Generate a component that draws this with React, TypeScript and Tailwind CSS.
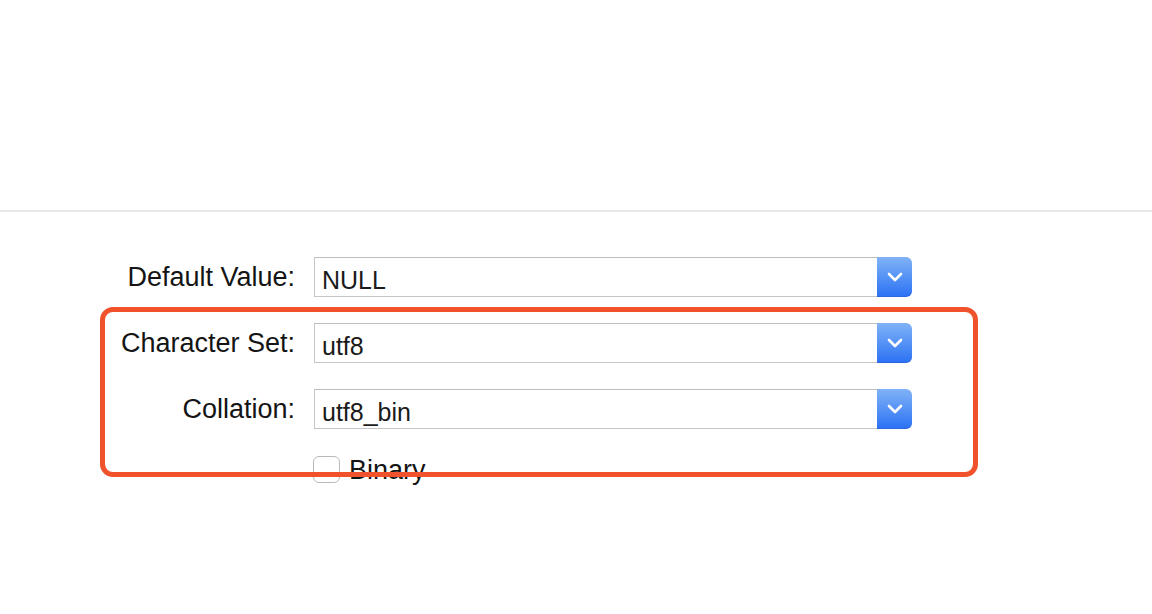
import React from 'react';

function Chevron() {
  return (
    <svg width="16" height="10" viewBox="0 0 16 10" fill="none">
      <path d="M2 2l6 6 6-6" stroke="white" strokeWidth="2.6" strokeLinecap="round" strokeLinejoin="round" />
    </svg>
  );
}

function SelectRow({ label, value }: { label: string; value: string }) {
  return (
    <div className="flex items-center">
      <div className="w-[314px] pr-[19px] pt-[1px] text-right text-[27px] leading-none text-[#141414]">{label}</div>
      <div className="flex h-[40px] w-[598px]">
        <div className="flex flex-1 items-center border border-[#c6c6c6] border-t-[#bdbdbd] border-r-0 bg-white pl-[7px] pt-[7px] text-[25px] leading-none text-[#1a1a1a]">
          {value}
        </div>
        <div className="flex w-[35px] items-center justify-center rounded-r-[6px] border-b border-[#2a66e0] bg-gradient-to-b from-[#80b2f6] to-[#2c72f4]">
          <Chevron />
        </div>
      </div>
    </div>
  );
}

export default function App() {
  return (
    <div className="relative h-[614px] w-[1152px] overflow-hidden bg-white font-['Liberation_Sans',Arial,sans-serif]">
      <div className="h-[210px]" />
      <div className="h-[2px] bg-[#e7e7e7]" />
      <div className="flex flex-col gap-[26px] pt-[45px]">
        <SelectRow label="Default Value:" value="NULL" />
        <SelectRow label="Character Set:" value="utf8" />
        <SelectRow label="Collation:" value="utf8_bin" />
        <div className="-mt-[1px] flex items-center pl-[313px]">
          <div className="h-[27px] w-[27px] rounded-[6px] border border-[#b9b9b9] bg-white" />
          <span className="ml-[9px] pt-[3px] text-[27px] leading-none text-[#141414]">Binary</span>
        </div>
      </div>

      {/* annotation box over the form */}
      <div className="pointer-events-none absolute left-[100px] top-[307px] h-[170px] w-[878px] rounded-[13px] border-[5px] border-[#f0522c]" />
    </div>
  );
}
